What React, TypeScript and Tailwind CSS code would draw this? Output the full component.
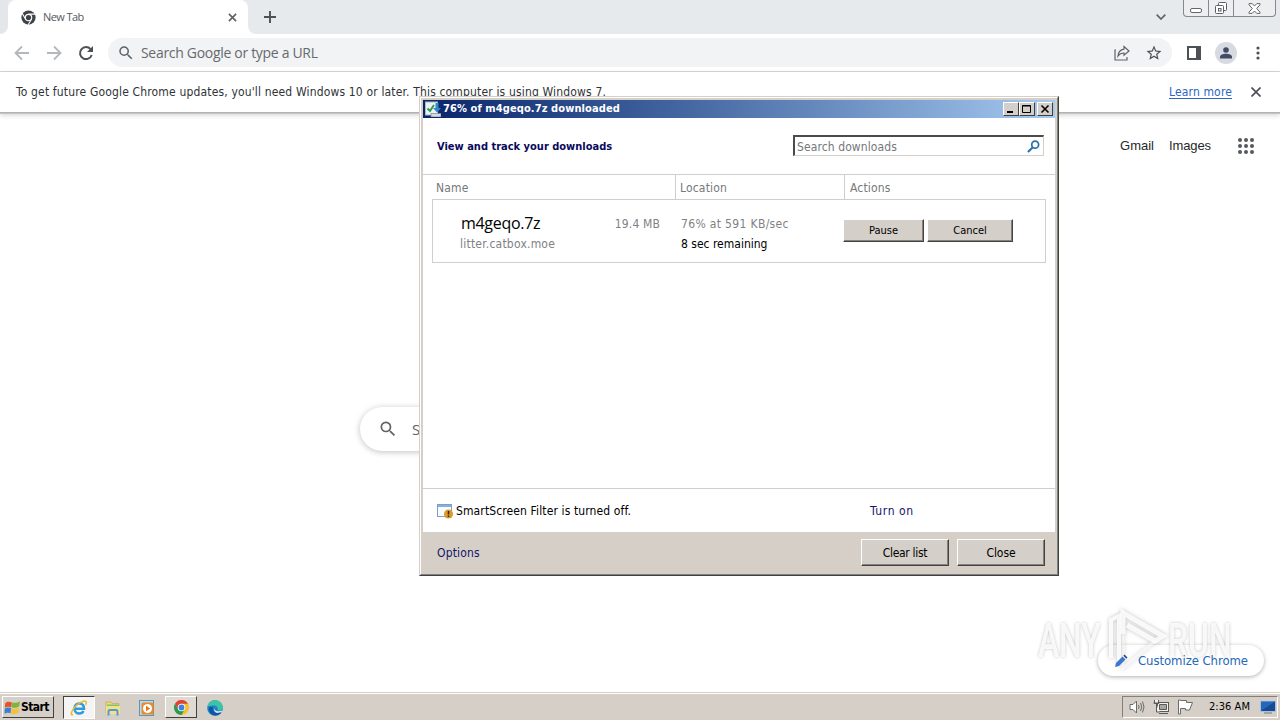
import type { ReactNode } from "react";

const RAISED =
  "border border-white border-r-[#45423f] border-b-[#45423f] bg-[#d4cfc8] shadow-[inset_-1px_-1px_0_#85817c]";

function Magnifier({ className }: { className: string }) {
  return (
    <svg viewBox="0 0 24 24" className={className} fill="currentColor">
      <path d="M15.5 14h-.79l-.28-.27A6.47 6.47 0 0 0 16 9.5 6.5 6.5 0 1 0 9.5 16c1.61 0 3.09-.59 4.23-1.57l.27.28v.79l5 4.99L20.49 19l-4.99-5zm-6 0C7.01 14 5 11.99 5 9.5S7.01 5 9.5 5 14 7.01 14 9.5 11.99 14 9.5 14z" />
    </svg>
  );
}

function TabStrip() {
  return (
    <div className="flex h-[34px] bg-[#e7eaed]">
      <div className="w-2 bg-white">
        <div className="h-full rounded-br-lg bg-[#e4e6ea]" />
      </div>
      <div className="flex w-[240px] items-center rounded-t-lg bg-white pl-[13px]">
        <svg viewBox="0 0 16 16" className="size-[15px]">
          <circle cx="8" cy="8" r="7.6" fill="#3f4246" />
          <circle cx="8" cy="8" r="4" fill="#fff" />
          <circle cx="8" cy="8" r="2.8" fill="#3f4246" />
          <path d="M8 4.4h7.2M4.9 9.8 1.3 3.6M11.1 9.8 7.5 16" stroke="#fff" strokeWidth="1.1" />
        </svg>
        <span className="ml-[7px] w-[173px] font-['Open_Sans',sans-serif] text-[11px] tracking-[-0.6px] text-[#55595d]">New Tab</span>
        <svg viewBox="0 0 10 10" className="ml-3 size-[9px] shrink-0" stroke="#5f6368" strokeWidth="1.8">
          <path d="M1 1l8 8M9 1l-8 8" />
        </svg>
      </div>
      <div className="w-2 bg-white">
        <div className="h-full rounded-bl-lg bg-[#e7eaed]" />
      </div>
      <svg viewBox="0 0 12 12" className="mt-[11px] ml-2 size-3" stroke="#4d5156" strokeWidth="1.9">
        <path d="M6 0v12M0 6h12" />
      </svg>
      <div className="flex-1" />
      <svg viewBox="0 0 10 6" className="mt-[14px] mr-[17px] h-[6px] w-[10px]" fill="none" stroke="#5f6368" strokeWidth="1.7">
        <path d="M.7.7 5 5 9.3.7" />
      </svg>
      <div className="mr-1 flex h-[17px] w-[93px] rounded-b-[4px] border border-t-0 border-[#85888c] bg-[#eceef0]">
        <div className="flex w-[25px] items-end justify-center border-r border-[#85888c] pb-[3px]">
          <div className="h-[5px] w-3 rounded-[2px] border border-[#63666b] bg-white" />
        </div>
        <div className="flex w-[25px] justify-center border-r border-[#85888c] pt-[1px]">
          <svg viewBox="0 0 14 14" className="size-[14px]" fill="#fff" stroke="#5c5f64">
            <rect x="4.5" y="1.5" width="8" height="8" rx="1" />
            <rect x="1.5" y="4.5" width="8" height="8" rx="1" />
            <rect x="4.5" y="7.5" width="2.5" height="2.5" />
          </svg>
        </div>
        <div className="flex flex-1 justify-center pt-[3px]">
          <svg viewBox="0 0 13 11" className="h-[11px] w-[13px]" fill="#fff" stroke="#63666b">
            <path d="M1 .6h3.2L6.5 3 8.8.6H12v1.2L8.7 5.5 12 9.2v1.2H8.8L6.5 8l-2.3 2.4H1V9.2l3.3-3.7L1 1.8z" />
          </svg>
        </div>
      </div>
    </div>
  );
}

function Toolbar() {
  return (
    <div className="flex h-[38px] items-center border-b border-[#d5d7da] bg-white pl-[14px]">
      <svg viewBox="0 0 16 16" className="size-4" fill="none" stroke="#b5b8bb" strokeWidth="1.8">
        <path d="M15 8H2M8 1.5 1.5 8 8 14.5" />
      </svg>
      <svg viewBox="0 0 16 16" className="ml-4 size-4" fill="none" stroke="#b5b8bb" strokeWidth="1.8">
        <path d="M1 8h13M8 1.500 14.500 8 8 14.500" />
      </svg>
      <svg viewBox="0 0 16 16" className="ml-4 size-4" fill="none" stroke="#4d5156" strokeWidth="2">
        <path d="M13.700 10A6 6 0 1 1 12.600 4.200" />
        <path d="M15 1v6H9z" fill="#4d5156" stroke="none" />
      </svg>
      <div className="ml-[14px] flex h-[29px] w-[1064px] items-center rounded-full bg-[#f1f3f4] pl-[9px]">
        <Magnifier className="size-[18px] text-[#5f6368]" />
        <span className="ml-[6px] flex-1 font-['Open_Sans',sans-serif] text-[14px] tracking-[-0.31px] text-[#666a6e]">Search Google or type a URL</span>
        <svg viewBox="0 0 16 16" className="size-4" fill="none" stroke="#5f6368" strokeWidth="1.200">
          <path d="M2 5H1v10h12v-3" />
          <path d="M10 1.500 15 6l-5 4.300V8C7.500 8 5.500 8.800 4 11c.3-3.500 2.500-6.300 6-6.800z" />
        </svg>
        <svg viewBox="0 0 24 24" className="mr-[9px] ml-[15px] size-[18px]" fill="#4d5156">
          <path d="M22 9.240l-7.190-.62L12 2 9.190 8.630 2 9.240l5.460 4.730L5.820 21 12 17.270 18.180 21l-1.630-7.030L22 9.240zM12 15.400l-3.760 2.270 1-4.280-3.320-2.880 4.380-.38L12 6.100l1.710 4.040 4.380.38-3.320 2.880 1 4.280L12 15.400z" />
        </svg>
      </div>
      <div className="ml-[15px] h-[14px] w-[14px] border-2 border-r-[5px] border-[#4d5156]" />
      <div className="ml-[14px] flex size-[22px] items-center justify-center rounded-full bg-[#d7dbe1]">
        <svg viewBox="0 0 12 12" className="size-3" fill="#434a63">
          <circle cx="6" cy="3" r="2.800" />
          <path d="M0 11.500V10c0-2 3-3.200 6-3.200s6 1.200 6 3.200v1.500z" />
        </svg>
      </div>
      <svg viewBox="0 0 4 14" className="ml-[19px] h-[14px] w-1" fill="#4d5156">
        <circle cx="2" cy="2" r="1.600" /><circle cx="2" cy="7" r="1.600" /><circle cx="2" cy="12" r="1.600" />
      </svg>
    </div>
  );
}

function InfoBar() {
  return (
    <div className="relative flex h-[41px] items-center border-b border-[#b2b3b2] bg-white pr-[19px] pl-4 text-[12px] shadow-[0_1px_0_#c4c5c4,0_2px_5px_#00000030]">
      <span className="flex-1 tracking-[0.16px] text-[#303336]">
        To get future Google Chrome updates, you'll need Windows 10 or later. This computer is using Windows 7.
      </span>
      <span className="tracking-[0.15px] text-[#2c66c4] underline underline-offset-2">Learn more</span>
      <svg viewBox="0 0 10 10" className="ml-[19px] size-[10px]" stroke="#4d5156" strokeWidth="1.700">
        <path d="M.5.5l9 9M9.500.5l-9 9" />
      </svg>
    </div>
  );
}

function Page() {
  return (
    <div className="flex h-[579px] flex-col bg-white">
      <div className="flex h-[65px] items-center justify-end pr-[26px] font-['Liberation_Sans',sans-serif] text-[13px] text-[#26282b]">
        <span className="pt-[1px]">Gmail</span>
        <span className="ml-[15px] pt-[1px] tracking-[-0.1px]">Images</span>
        <div className="ml-[27px] grid grid-cols-3 gap-[2px]">
          {Array.from({ length: 9 }, (_, i) => (
            <div key={i} className="size-1 rounded-full bg-[#55595e]" />
          ))}
        </div>
      </div>
      <div className="mx-auto mt-[229px] flex h-[44px] w-[560px] items-center rounded-full bg-white pl-[18px] shadow-[0_1px_6px_#20212447]">
        <Magnifier className="size-5 text-[#5f6368]" />
        <span className="ml-[14px] font-['Open_Sans',sans-serif] text-[15px] text-[#5f6368]">Search Google or type a URL</span>
      </div>
      <div className="mt-[194px] mr-4 ml-auto flex h-[31px] w-[166px] items-center rounded-full bg-white pl-[16px] shadow-[0_1px_4px_#00000050]">
        <svg viewBox="0 0 14 14" className="relative z-20 size-[14px]">
          <path d="M1 13l1-4 6.500-6.500 3 3L5 12z" fill="#3a78cf" />
          <path d="M9.300 1.700 10.500.5l3 3-1.200 1.200z" fill="#23508f" />
        </svg>
        <span className="relative z-20 ml-[10px] pt-[1px] text-[13px] tracking-[-0.06px] text-[#2467b8]">Customize Chrome</span>
      </div>
    </div>
  );
}

function Watermark() {
  const word =
    "block origin-left scale-x-[0.65] font-['Roboto',sans-serif] text-[49px] font-medium leading-[49px] text-white/85 [text-shadow:0_0_4px_#0000003d]";
  return (
    <div className="pointer-events-none absolute top-[608px] left-[1038px] z-10 flex h-[64px] w-[196px]">
      <div className="w-[66px] pt-[8px]"><span className={word}>ANY</span></div>
      <svg viewBox="0 0 64 64" className="w-[64px] overflow-visible drop-shadow-[0_0_2px_#00000048]" fill="none" stroke="#fff" strokeOpacity=".85" strokeWidth="4">
        <path d="M7 50V12l8-4v48" />
        <path d="M19 26V5l40 23-8 5-28-16" strokeWidth="5" />
        <path d="M19 26v34l32-27" strokeWidth="3" strokeOpacity=".55" />
      </svg>
      <div className="w-[66px] pt-[8px]"><span className={word}>RUN</span></div>
    </div>
  );
}

function CaptionButton({ children }: { children: ReactNode }) {
  return (
    <div className="flex h-[14px] w-4 items-center justify-center border border-white border-r-[#404040] border-b-[#404040] bg-[#d4cfc8]">
      <svg viewBox="0 0 12 10" className="h-[10px] w-3" fill="none" stroke="#000">{children}</svg>
    </div>
  );
}

function DownloadsWindow() {
  return (
    <div className="absolute top-[96px] left-[419px] h-[480px] w-[640px] border border-[#d4d0c8] border-r-[#404040] border-b-[#404040]">
      <div className="flex h-full flex-col border border-white border-r-[#808080] border-b-[#808080] bg-[#d5cfc8] p-[2px] pb-0">
        <div className="flex h-[18px] shrink-0 items-center bg-linear-to-r from-[#0a246a] to-[#a6caf0] pr-[2px] pl-[2px]">
          <svg viewBox="0 0 16 16" className="size-4">
            <rect x=".5" y="1" width="12" height="13" fill="#eef3f0" stroke="#a9bdb9" />
            <path d="M2.500 7.500 5 10l4-6" fill="none" stroke="#2e9b55" strokeWidth="2" />
            <path d="M10.500 2h3v5H16l-4 4.500L8 7h2.500z" fill="#3486cf" />
            <path d="M6 12.500h10V16H6z" fill="#d5dade" stroke="#7c8791" strokeWidth=".7" />
          </svg>
          <span className="ml-[2px] flex-1 pt-[1px] text-[11px] font-bold tracking-[0.1px] text-white">76% of m4geqo.7z downloaded</span>
          <CaptionButton><path d="M2 8h6" strokeWidth="2" /></CaptionButton>
          <CaptionButton><path d="M1.500 1.500h8v7h-8zM1 2h9" /></CaptionButton>
          <div className="w-[2px]" />
          <CaptionButton><path d="M2.500 1.500l7 7M9.500 1.500l-7 7" strokeWidth="1.600" /></CaptionButton>
        </div>
        <div className="flex h-[414px] shrink-0 flex-col bg-white">
          <div className="flex h-[56px] items-center justify-between pr-[11px] pl-[14px]">
            <span className="pt-[2px] text-[11px] font-bold text-[#0a0a5c]">View and track your downloads</span>
            <div className="mb-[1px] flex h-[21px] w-[251px] items-center border-t-2 border-r border-b border-l-2 border-[#d4d0c8] border-t-[#4b4b4b] border-l-[#4b4b4b] pr-[3px] pl-[2px]">
              <span className="flex-1 pt-[1px] text-[12px] tracking-[0.1px] text-[#75777a]">Search downloads</span>
              <svg viewBox="0 0 14 14" className="size-[13px]" fill="none" stroke="#2d73ab">
                <circle cx="8.800" cy="5" r="3.700" strokeWidth="1.900" />
                <path d="M6 8 1 13" strokeWidth="2.300" />
              </svg>
            </div>
          </div>
          <div className="flex h-[25px] border-t border-[#cfcfcf] text-[12px] leading-[26px] tracking-[0.17px] text-[#76787a]">
            <div className="w-[252px] pl-[13px]">Name</div>
            <div className="w-[169px] border-l border-[#cfcfcf] pl-1">Location</div>
            <div className="flex-1 border-l border-[#cfcfcf] pl-[5px]">Actions</div>
          </div>
          <div className="mr-[9px] ml-[9px] flex h-[64px] border border-[#cfcfcf] pt-[14px] text-[12px] leading-5 text-[#7f8183]">
            <div className="w-[154px] pl-[27px]">
              <div className="h-5 pl-[1px] font-['Open_Sans',sans-serif] text-[16px] leading-[18px] tracking-[-0.3px] text-black">m4geqo.7z</div>
              <div className="tracking-[0.22px]">litter.catbox.moe</div>
            </div>
            <div className="w-[73px] text-right tracking-[0.15px]">19.4 MB</div>
            <div className="w-[162px] pl-[21px]">
              <div className="tracking-[0.34px]">76% at 591 KB/sec</div>
              <div className="text-black">8 sec remaining</div>
            </div>
            <div className="flex gap-[3px] pt-[5px] pl-[21px] text-center text-[11px] leading-[22px] text-black">
              <div className={"h-[23px] w-[81px] " + RAISED}>Pause</div>
              <div className={"h-[23px] w-[86px] " + RAISED}>Cancel</div>
            </div>
          </div>
          <div className="flex-1" />
          <div className="flex h-[44px] items-center border-t border-[#cfcfcf] pl-[14px] text-[12px]">
            <svg viewBox="0 0 16 16" className="size-4">
              <rect x=".5" y="1.500" width="14" height="12" fill="#f8fbff" stroke="#7f9fc4" />
              <path d="M1 2h13v2H1z" fill="#86aee0" />
              <circle cx="11.500" cy="11" r="4.500" fill="#db9a2b" />
              <path d="M11.500 8v3.500M11.500 12.500V14" stroke="#3b2500" strokeWidth="1.500" />
            </svg>
            <span className="ml-[3px] w-[414px] tracking-[0.12px] text-black">SmartScreen Filter is turned off.</span>
            <span className="tracking-[0.6px] text-[#14146b]">Turn on</span>
          </div>
        </div>
        <div className="flex h-[41px] items-center pr-[10px] pl-[14px] text-center text-[12px] leading-[26px] text-black">
          <span className="flex-1 text-left tracking-[0.15px] text-[#14146b]">Options</span>
          <div className={"mr-2 h-[27px] w-[88px] tracking-[-0.3px] " + RAISED}>Clear list</div>
          <div className={"h-[27px] w-[88px] tracking-[-0.1px] " + RAISED}>Close</div>
        </div>
      </div>
    </div>
  );
}

function Flag() {
  return (
    <svg viewBox="0 0 20 20" className="size-[17px] -rotate-6">
      <path d="M2 4c3-2 5-1 8 0L8.500 9.500c-2-1-5-1.500-7.500 0z" fill="#e2532b" />
      <path d="M10.500 4c3 1.500 6 1 9-.5L18 9.500c-3 1.500-6 1.500-9 .5z" fill="#7db53a" />
      <path d="M.800 10.500c3-1.500 5-1 7.500 0L7 16.500c-2-1-4-1.500-7.500 0z" fill="#3b7fd0" />
      <path d="M8.800 11c3 1.500 6 1 9-.5L16.500 16.500c-3 1.500-6 1.500-9 .5z" fill="#f3c13a" />
    </svg>
  );
}

function Taskbar() {
  return (
    <div className="flex h-[28px] border-t border-[#d4d0c8] bg-[#d5cfc8] shadow-[inset_0_1px_0_#fff]">
      <div className="mt-[3px] ml-[2px] flex h-[22px] w-[52px] items-center border border-white border-r-[#404040] border-b-[#404040] pl-[1px]">
        <Flag />
        <span className="text-[12px] font-bold tracking-[-0.6px] text-black">Start</span>
      </div>
      <div className="mt-[3px] ml-[9px] flex h-[23px] w-[32px] items-center justify-center border border-[#404040] border-r-white border-b-white bg-[#f6f4f2]">
        <svg viewBox="0 0 18 18" className="size-[18px]" fill="none">
          <path d="M4.500 9.800H14C14 6.500 12 4.500 9.200 4.500S4.500 6.700 4.500 9.500s2 5 4.800 5c2 0 3.400-.9 4.200-2.500" stroke="#2e9be0" strokeWidth="2.500" />
          <path d="M3 15.500C0 17 1 12 5.500 7.300S16.500.5 16.300 3.500c0 .8-.3 1.500-.8 2.300" stroke="#e8b92f" strokeWidth="1.500" />
        </svg>
      </div>
      <div className="flex h-full w-9 items-center justify-center pt-[2px]">
        <svg viewBox="0 0 16 16" className="size-4">
          <path d="M1 2h5l1 1.500h7V13H1z" fill="#f2d778" stroke="#c5a03f" strokeWidth=".6" />
          <path d="M2 4.500h12V8H2z" fill="#7cc46b" />
          <path d="M1 6h14v8H1z" fill="#f6df8a" />
          <path d="M3.500 15.500V11.500q0-1.500 1.500-1.500h6q1.500 0 1.500 1.500v4" fill="none" stroke="#4f9dce" strokeWidth="2" />
        </svg>
      </div>
      <div className="flex h-full w-8 items-center justify-center pt-[2px]">
        <svg viewBox="0 0 16 16" className="size-4">
          <rect x=".5" y=".5" width="14" height="15" fill="#b8dbf1" stroke="#5794be" />
          <rect x="2.500" y="2.500" width="12" height="12" rx="1.500" fill="#ee8a22" />
          <circle cx="8.500" cy="8.500" r="4.500" fill="#fff" />
          <path d="M7 5.800v5.400l4.300-2.700z" fill="#e5761a" />
        </svg>
      </div>
      <div className="mt-[3px] ml-[2px] flex h-[22px] w-[32px] items-center justify-center border border-white border-r-[#404040] border-b-[#404040] bg-[#dedad4]">
        <svg viewBox="0 0 16 16" className="size-[15px]">
          <circle cx="8" cy="8" r="8" fill="#f5c02c" />
          <path d="M8 8 4.530 10 1.070 4A8 8 0 0 1 14.930 4H8z" fill="#dd4435" />
          <path d="M1.070 4A8 8 0 0 0 8 16l3.460-6L8 8 4.530 10z" fill="#2b9a55" />
          <circle cx="8" cy="8" r="4" fill="#fff" />
          <circle cx="8" cy="8" r="3.100" fill="#3f80e0" />
        </svg>
      </div>
      <div className="ml-[2px] flex h-full w-8 items-center justify-center pt-[2px]">
        <svg viewBox="0 0 16 16" className="size-4">
          <circle cx="8" cy="8" r="7.800" fill="#1b7fcb" />
          <path d="M.5 6C2 1.500 5 0 8.500.2 13 .5 16 4 15.800 7.500c-.2 2.500-3 3.500-5.300 2.700 1-2.500-.8-4.700-3.500-4.700-2.500 0-5 1-6.500.5z" fill="#3cc5a4" />
          <path d="M6 7.500c-1 3 1.500 6.500 8.500 5-3 4-10 4-12-1S4 6 6 7.500z" fill="#1254a0" />
          <path d="M9 7c-1.500.5-2 2-.5 3.500 2 1 4 .8 6 0L15 12l-5 1c-3-1-4-4-1-6z" fill="#d9e6ee" />
        </svg>
      </div>
      <div className="flex-1" />
      <div className="mt-[3px] mr-[2px] flex h-[22px] w-[156px] items-center border border-[#808080] border-r-white border-b-white pl-[6px]">
        <svg viewBox="0 0 16 16" className="size-4" fill="none" stroke="#6c6a67">
          <path d="M1 5.500h3L7.500 2v12L4 10.500H1z" fill="#fff" />
          <path d="M9.500 6q1.200 2 0 4M11.500 4q2.500 4 0 8M13.500 2.500q3 5.500 0 11" />
        </svg>
        <svg viewBox="0 0 16 16" className="ml-[8px] size-4" fill="#f4f2ef" stroke="#5b5957">
          <rect x="4.500" y="3.500" width="11" height="9" />
          <path d="M6.500 5.500h7v5h-7z" fill="#aaa7a3" />
          <path d="M6 14.500h9M1.500 1v3.500h4V1M.5 4h6M3.500 5v8h3" />
        </svg>
        <svg viewBox="0 0 16 16" className="ml-[8px] size-4" fill="#fff" stroke="#6c6a67">
          <path d="M1.500 1v14h2V9.500h5v1.500h4l3-7.500H9.500V1.500h-6V1z" />
        </svg>
        <span className="ml-[16px] pt-[1px] text-[11px] tracking-[0.05px] whitespace-nowrap text-black">2:36 AM</span>
        <svg viewBox="0 0 16 14" className="ml-[10px] h-[14px] w-4">
          <path d="M.5 1h15v10.500H.5z" fill="#2467bb" stroke="#b5cbe0" strokeWidth=".8" />
          <path d="M1 11 15 1.500V11z" fill="#174a94" />
          <path d="M4 13h8" stroke="#777" />
        </svg>
      </div>
    </div>
  );
}

export default function App() {
  return (
    <div className="relative flex h-[720px] w-[1280px] flex-col overflow-hidden bg-white font-['DejaVu_Sans_Condensed','DejaVu_Sans',sans-serif]">
      <TabStrip />
      <Toolbar />
      <InfoBar />
      <Page />
      <Taskbar />
      <DownloadsWindow />
      <Watermark />
    </div>
  );
}
